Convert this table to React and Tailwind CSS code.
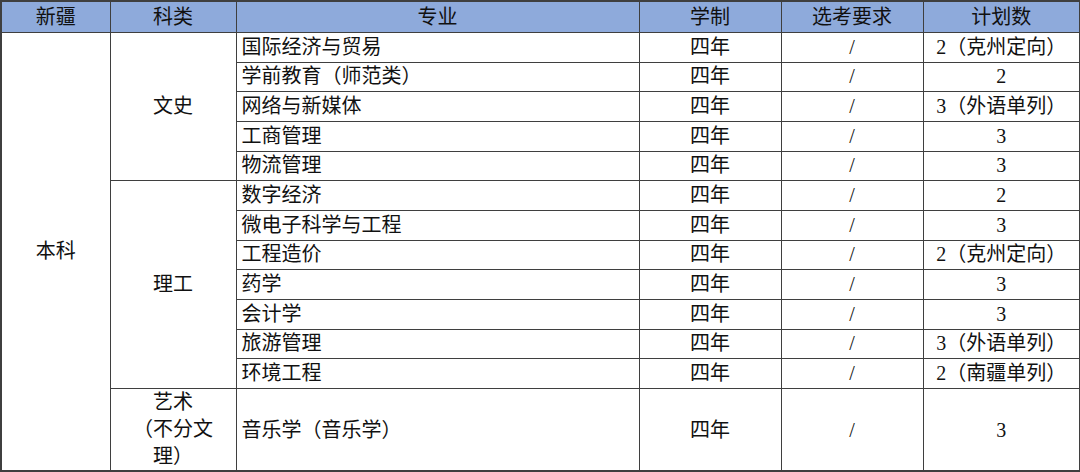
const rows = [
  { major: '国际经济与贸易', plan: '2（克州定向）' },
  { major: '学前教育（师范类）', plan: '2' },
  { major: '网络与新媒体', plan: '3（外语单列）' },
  { major: '工商管理', plan: '3' },
  { major: '物流管理', plan: '3' },
  { major: '数字经济', plan: '2' },
  { major: '微电子科学与工程', plan: '3' },
  { major: '工程造价', plan: '2（克州定向）' },
  { major: '药学', plan: '3' },
  { major: '会计学', plan: '3' },
  { major: '旅游管理', plan: '3（外语单列）' },
  { major: '环境工程', plan: '2（南疆单列）' },
];

const td = 'border border-[#3f3f3f] p-0 text-center align-middle';
const th = 'border border-[#3f3f3f] p-0 text-center align-middle font-normal';

export default function App() {
  return (
    <div
      className="w-[1080px] h-[472px] bg-white text-[20px] text-[#111] overflow-hidden"
      style={{ fontFamily: '"Liberation Serif", "Noto Sans CJK SC", serif' }}
    >
      <table className="table-fixed border-collapse w-[1079px] border-2 border-[#3f3f3f]">
        <colgroup>
          <col className="w-[109px]" />
          <col className="w-[126px]" />
          <col className="w-[403px]" />
          <col className="w-[142px]" />
          <col className="w-[142px]" />
          <col className="w-[157px]" />
        </colgroup>
        <thead>
          <tr className="h-[29px] bg-[#8eaadb]">
            <th className={th}>新疆</th>
            <th className={th}>科类</th>
            <th className={th}>专业</th>
            <th className={th}>学制</th>
            <th className={th}>选考要求</th>
            <th className={th}>计划数</th>
          </tr>
        </thead>
        <tbody>
          {rows.map((r, i) => (
            <tr key={r.major} className="h-[29.67px] leading-[27px]">
              {i === 0 && <td rowSpan={13} className={td}>本科</td>}
              {i === 0 && <td rowSpan={5} className={td}>文史</td>}
              {i === 5 && <td rowSpan={7} className={td}>理工</td>}
              <td className={`${td} text-left pl-[5px] whitespace-nowrap`}>{r.major}</td>
              <td className={td}>四年</td>
              <td className={td}>/</td>
              <td className={`${td} whitespace-nowrap`}>{r.plan}</td>
            </tr>
          ))}
          <tr className="h-[83px]">
            <td className={`${td} leading-[27px]`}>
              艺术<br />（不分文<br />理）
            </td>
            <td className={`${td} text-left pl-[5px]`}>音乐学（音乐学）</td>
            <td className={td}>四年</td>
            <td className={td}>/</td>
            <td className={td}>3</td>
          </tr>
        </tbody>
      </table>
    </div>
  );
}
